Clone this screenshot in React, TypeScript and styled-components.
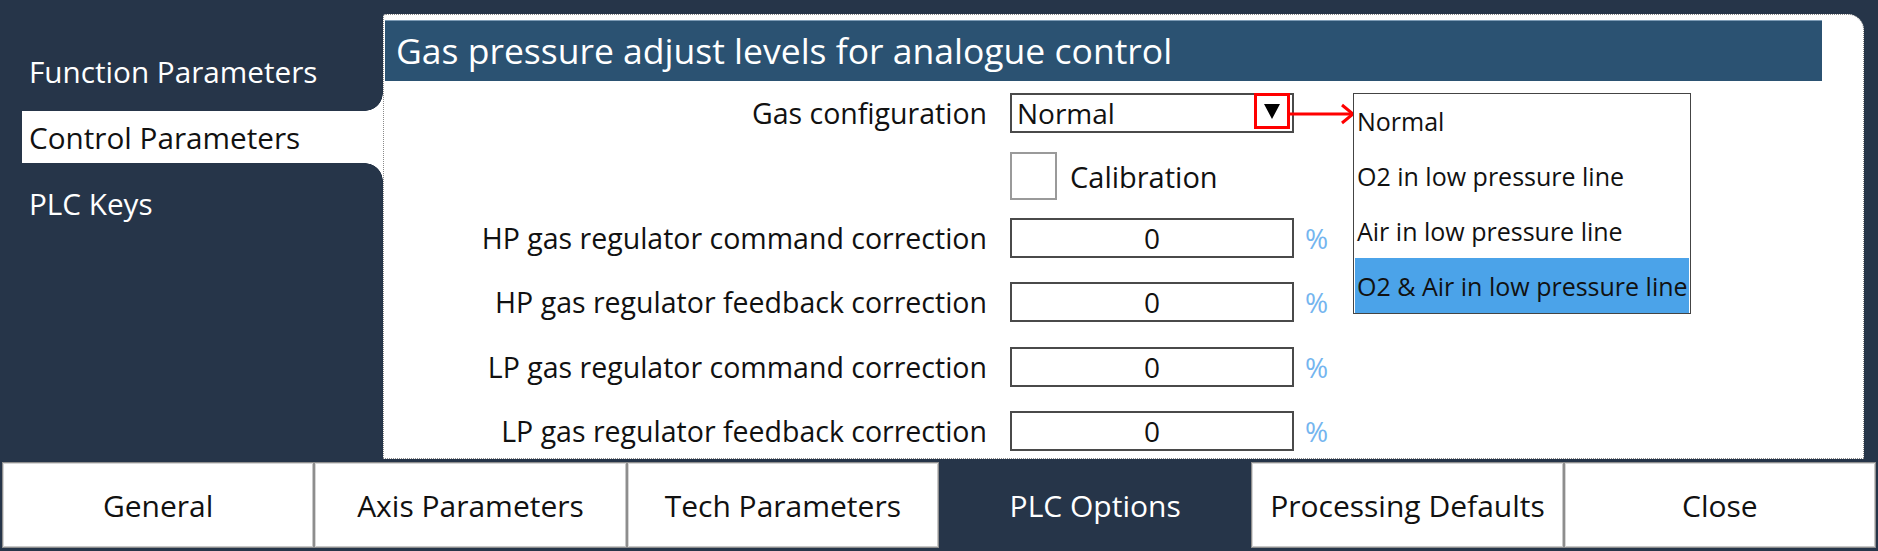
import React from "react";
import styled, { createGlobalStyle } from "styled-components";

const DARK = "#263549";
const HEADER = "#2b5272";
const FONT = `"Open Sans", "Noto Sans", sans-serif`;

const Global = createGlobalStyle`
  html, body { margin: 0; padding: 0; background: ${DARK}; overflow: hidden; }
  * { box-sizing: border-box; }
`;

const Page = styled.div`
  width: 1878px;
  height: 551px;
  background: ${DARK};
  display: flex;
  flex-direction: column;
  font-family: ${FONT};
`;

const Main = styled.div`
  height: 462px;
  display: flex;
`;

const Sidebar = styled.nav`
  width: 383px;
  flex: none;
  padding: 45px 0 0 22px;
  display: flex;
  flex-direction: column;
  gap: 14px;
`;

const Tab = styled.div<{ $active?: boolean }>`
  position: relative;
  height: 52px;
  display: flex;
  align-items: center;
  padding-left: 7px;
  font-size: 29.7px;
  color: ${(p) => (p.$active ? "#111" : "#fff")};
  background: ${(p) => (p.$active ? "#fff" : "transparent")};
  white-space: nowrap;
  ${(p) =>
    p.$active &&
    `
    &::before, &::after {
      content: "";
      position: absolute;
      right: 0;
      width: 18px;
      height: 18px;
    }
    &::before {
      top: -18px;
      background: radial-gradient(circle at 0 0, transparent 17.5px, #fff 18px);
    }
    &::after {
      bottom: -18px;
      background: radial-gradient(circle at 0 100%, transparent 17.5px, #fff 18px);
    }
  `}
`;

const Panel = styled.section`
  margin-top: 14px;
  width: 1481px;
  height: 445px;
  background: #fff;
  border: 1px dotted #8a8a8a;
  border-top-left-radius: 3px;
  border-top-right-radius: 16px;
  padding: 5px 41px 0 1px;
  position: relative;
`;

const Header = styled.h1`
  margin: 0;
  height: 61px;
  background: ${HEADER};
  border-top: 1px solid #7d9bb5;
  color: #fff;
  font-weight: 400;
  font-size: 35.5px;
  line-height: 58px;
  padding-left: 11px;
  white-space: nowrap;
`;

const Form = styled.div`
  display: flex;
  flex-direction: column;
`;

const Row = styled.div<{ $mt: number; $h?: number }>`
  display: flex;
  align-items: center;
  margin-top: ${(p) => p.$mt}px;
  height: ${(p) => p.$h ?? 40}px;
`;

const Label = styled.div`
  width: 602px;
  margin-right: 23px;
  text-align: right;
  font-size: 28.5px;
  color: #111;
  white-space: nowrap;
`;

const SelectBox = styled.div`
  position: relative;
  width: 284px;
  height: 40px;
  border: 2px solid #4a4a4a;
  display: flex;
  align-items: center;
  padding-left: 5px;
  font-size: 28px;
  color: #111;
`;

const RedBox = styled.div`
  position: absolute;
  left: 242px;
  top: -2px;
  width: 36px;
  height: 36px;
  border: 3px solid #ff0000;
  display: flex;
  align-items: center;
  justify-content: center;
`;

const Arrow = styled.svg`
  position: absolute;
  left: 278px;
  top: 7px;
`;

const DropList = styled.ul`
  position: absolute;
  left: 341px;
  top: -2px;
  width: 338px;
  height: 221px;
  margin: 0;
  padding: 0 1px;
  list-style: none;
  background: #fff;
  border: 1px solid #444;
  display: flex;
  flex-direction: column;
  justify-content: flex-end;
`;

const DropItem = styled.li<{ $selected?: boolean }>`
  height: 55px;
  display: flex;
  align-items: center;
  padding-left: 2px;
  font-size: 25px;
  color: #111;
  white-space: nowrap;
  background: ${(p) => (p.$selected ? "#4ba3e9" : "transparent")};
`;

const CheckBox = styled.div`
  width: 47px;
  height: 48px;
  border: 2px solid #9a9a9a;
  background: #fff;
`;

const CheckLabel = styled.span`
  margin-left: 13px;
  font-size: 29px;
  color: #111;
`;

const NumberBox = styled.div`
  width: 284px;
  height: 40px;
  border: 2px solid #4a4a4a;
  display: flex;
  align-items: center;
  justify-content: center;
  font-size: 28px;
  color: #111;
`;

const Unit = styled.span`
  margin-left: 11px;
  font-size: 28px;
  color: #74b5ef;
`;

const ButtonBar = styled.div`
  height: 86px;
  margin: 0 2px;
  display: grid;
  grid-template-columns: repeat(6, 1fr);
`;

const BarButton = styled.div<{ $active?: boolean }>`
  display: flex;
  align-items: center;
  justify-content: center;
  font-size: 30px;
  color: ${(p) => (p.$active ? "#fff" : "#111")};
  background: ${(p) => (p.$active ? DARK : "#fff")};
  border: 1px solid ${(p) => (p.$active ? DARK : "#8e8e8e")};
  box-shadow: ${(p) => (p.$active ? "none" : "inset 1px 1px 0 #d6d6d6, inset -1px -1px 0 #c8c8c8")};
  white-space: nowrap;
`;

const rows = [
  "HP gas regulator command correction",
  "HP gas regulator feedback correction",
  "LP gas regulator command correction",
  "LP gas regulator feedback correction",
];
const rowGaps = [18, 24, 25, 24];

const options = [
  "Normal",
  "O2 in low pressure line",
  "Air in low pressure line",
  "O2 & Air in low pressure line",
];

const buttons = [
  "General",
  "Axis Parameters",
  "Tech Parameters",
  "PLC Options",
  "Processing Defaults",
  "Close",
];

export default function App() {
  return (
    <Page>
      <Global />
      <Main>
        <Sidebar>
          <Tab>Function Parameters</Tab>
          <Tab $active>Control Parameters</Tab>
          <Tab>PLC Keys</Tab>
        </Sidebar>
        <Panel>
          <Header>Gas pressure adjust levels for analogue control</Header>
          <Form>
            <Row $mt={12}>
              <Label>Gas configuration</Label>
              <SelectBox>
                Normal
                <RedBox>
                  <svg width="16" height="16" viewBox="0 0 16 16">
                    <polygon points="0,1 16,1 8,16" fill="#000" />
                  </svg>
                </RedBox>
                <Arrow width="66" height="24" viewBox="0 0 66 24">
                  <line x1="0" y1="12" x2="62" y2="12" stroke="#ff0000" strokeWidth="3" />
                  <polyline points="52,3 63,12 52,21" fill="none" stroke="#ff0000" strokeWidth="3" />
                </Arrow>
                <DropList>
                  {options.map((o, i) => (
                    <DropItem key={o} $selected={i === 3}>
                      {o}
                    </DropItem>
                  ))}
                </DropList>
              </SelectBox>
            </Row>
            <Row $mt={19} $h={48}>
              <Label />
              <CheckBox />
              <CheckLabel>Calibration</CheckLabel>
            </Row>
            {rows.map((r, i) => (
              <Row key={r} $mt={rowGaps[i]}>
                <Label>{r}</Label>
                <NumberBox>0</NumberBox>
                <Unit>%</Unit>
              </Row>
            ))}
          </Form>
        </Panel>
      </Main>
      <ButtonBar>
        {buttons.map((b) => (
          <BarButton key={b} $active={b === "PLC Options"}>
            {b}
          </BarButton>
        ))}
      </ButtonBar>
    </Page>
  );
}
